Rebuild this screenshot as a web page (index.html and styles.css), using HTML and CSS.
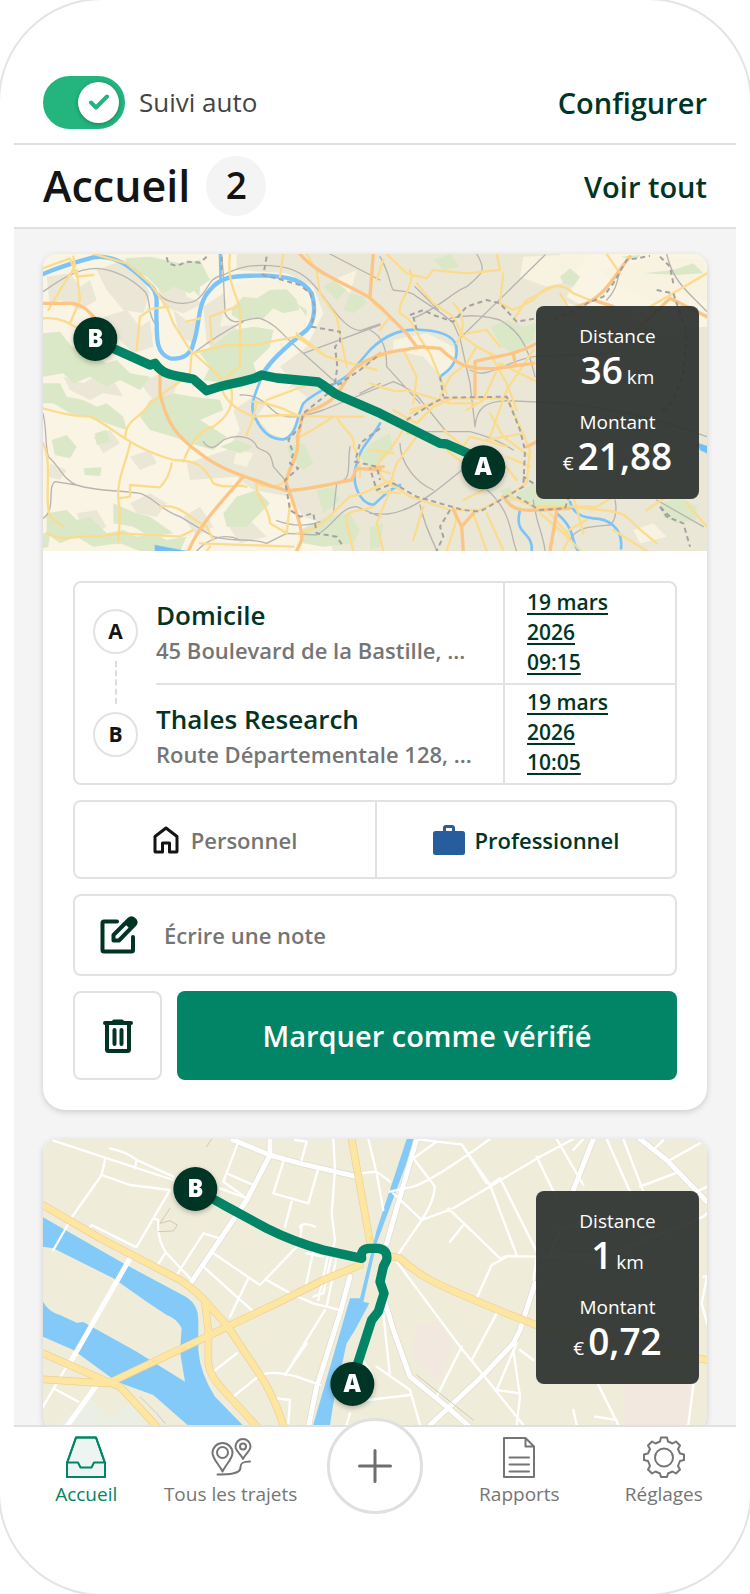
FILE: index.html
```html
<!DOCTYPE html>
<html lang="fr">
<head>
<meta charset="utf-8">
<meta name="viewport" content="width=device-width, initial-scale=1">
<title>Accueil</title>
<link rel="stylesheet" href="styles.css">
</head>
<body>
<div class="phone">
  <header class="tracking">
    <label class="switch">
      <span class="switch-track">
        <input class="switch-input" type="checkbox" role="switch" checked>
        <svg class="switch-check" viewBox="0 0 20 16" aria-hidden="true"><path d="M2 8.500L7 13.500L18 2.500"/></svg>
      </span>
      <span>Suivi auto</span>
    </label>
    <a class="link" href="#configurer">Configurer</a>
  </header>
  <div class="heading">
    <h1 class="title">Accueil</h1>
    <span class="count">2</span>
    <a class="link push" href="#trajets">Voir tout</a>
  </div>

  <main class="feed">
    <article class="card">
      <div class="map">
        <svg class="map-art" viewBox="9 12 1992 891" preserveAspectRatio="xMidYMid slice" role="img" aria-label="Trajet de A à B">
          <rect x="9" y="12" width="1992" height="891" fill="#f9f4e3"/>
          <g class="urban">
            <path d="M590 12L1560 12L1610 90L1580 140L1650 180L1760 170L1840 240L2001 230L2001 903L880 903L850 820L790 800L750 740L640 720L590 680L450 690L440 640L560 600L600 540L580 480L640 440L700 460L760 400L720 350L800 290L850 190L820 110L740 70L590 60Z"/>
            <path d="M20 80L90 70L120 110L150 90L170 150L120 180L60 150L30 170ZM170 60L250 30L300 70L330 130L310 190L250 180L200 120ZM340 60L380 90L430 70L440 140L490 160L430 190L370 170ZM190 200L260 180L300 230L330 210L340 290L280 310L240 270ZM400 180L450 220L480 200L460 280L420 260ZM490 170L550 130L590 240L540 310L500 280ZM70 380L130 400L180 370L220 390L250 440L190 430L150 450L90 420ZM300 400L360 370L420 390L400 430L340 450ZM270 620L330 600L350 640L300 660ZM160 560L210 540L240 580L190 610ZM270 760L330 730L380 760L350 800L290 790ZM110 790L170 780L200 830L140 860ZM430 800L480 770L520 830L470 860ZM560 820L620 800L680 860L600 880ZM30 640L80 660L60 690L25 680Z"/>
          </g>
          <g class="pale">
            <path d="M1060 270L1160 250L1240 290L1250 340L1200 375L1150 320L1060 300ZM700 430L760 410L800 440L770 520L740 570L690 550L650 500ZM540 230L570 110L680 80L780 110L815 190L770 260L680 240L610 220ZM1450 20L1640 12L1600 90L1520 110L1440 80ZM1570 150L1640 190L1590 180ZM1680 60L1850 20L1990 30L2001 150L1910 130L1850 160L1730 110ZM1780 840L1840 820L1880 860L1800 880ZM1680 300L1760 330L1700 360ZM880 90L950 60L930 130ZM590 600L640 610L620 650L580 640ZM720 820L760 800L770 850L730 860Z"/>
          </g>
          <g class="green">
            <path d="M255 25L330 20L420 40L480 30L510 90L450 130L400 110L370 130L320 80L270 60ZM575 175L610 140L650 145L690 120L740 118L770 150L778 180L730 190L700 175L670 205L600 210L575 195ZM9 250L60 245L95 290L150 310L200 340L230 330L270 370L330 380L300 420L240 390L200 410L150 380L100 400L70 370L9 380ZM9 400L60 400L80 440L130 450L170 470L200 460L250 500L260 540L200 520L150 500L90 490L40 460L9 460Z"/>
            <path d="M480 310L540 270L580 240L640 230L700 240L690 290L640 340L650 370L560 400L490 390L510 350ZM330 450L400 430L460 440L540 450L550 480L480 510L560 560L520 600L450 580L400 560L330 540L300 500ZM35 570L80 555L110 590L90 625L45 615ZM165 550L200 540L210 575L170 585ZM130 655L185 652L180 678L135 675ZM460 120L480 110L478 140ZM550 790L590 740L650 720L690 760L650 800L620 830L560 830ZM850 110L880 90L920 120L890 150ZM910 180L930 130L970 140L980 160L940 190ZM770 160L800 200L800 180ZM540 590L590 570L640 590L600 610Z"/>
            <path d="M20 790L80 780L110 810L150 800L200 850L250 840L290 860L340 850L380 870L440 860L420 903L300 903L240 880L160 890L110 860L60 880L20 850ZM220 760L290 790L330 800L400 850L330 860L280 830L220 820ZM740 590L790 580L820 640L790 660L750 620ZM830 720L880 710L900 750L850 790ZM780 840L860 800L930 790L960 840L940 880L850 890L790 880ZM1180 30L1230 12L1260 50L1210 60ZM1350 230L1400 210L1450 230L1490 220L1480 270L1420 310L1385 290ZM1560 80L1590 55L1620 80L1600 110L1570 100ZM1490 300L1480 340L1500 360ZM990 580L1050 550L1060 600L1020 640L990 660L960 620ZM9 850L30 850L25 890L9 895ZM1430 730L1500 690L1580 700L1590 780L1520 780L1440 760ZM1860 760L1920 740L1970 770L1970 810L1910 820L1870 800ZM1810 70L1900 60L1960 40L1990 70L1910 75ZM1740 20L1800 15L1790 30ZM990 830L1030 820L1020 890L990 900ZM1380 720L1410 710L1430 750L1400 760Z"/>
          </g>
          <g class="rail">
            <path d="M9 125C60 90 110 55 170 55C230 60 280 90 315 125C335 150 320 190 345 220M340 110C370 170 440 165 470 150C510 120 500 85 550 75C600 50 640 40 720 50C790 60 820 100 850 140C880 180 920 240 960 242L1020 222M550 75L555 190C580 240 620 200 660 205C710 220 740 270 790 310L890 400M460 310C500 280 560 240 610 215M790 310L1020 225M960 430L1020 400M870 12L1020 90M490 575C510 605 530 590 550 570C590 550 640 560 650 590C670 610 690 590 700 650L735 690M600 435C660 430 680 470 710 490C750 510 790 500 850 480L1060 395C1100 410 1130 430 1150 460L1215 540M9 490C20 530 15 590 25 620C60 650 70 690 110 705C170 725 240 720 300 730C340 740 360 780 420 800L520 860C600 880 620 860 680 880L740 850L830 855C880 830 900 770 950 770L1020 800M9 805C50 780 20 710 45 695L110 705M470 903C510 860 560 850 600 870M710 812C760 830 800 830 840 815M890 700L880 790M930 590C920 650 940 690 890 700M1020 20C1050 70 1050 110 1060 120C1080 125 1110 120 1130 140C1190 180 1210 190 1240 220L1260 265L1290 400L1305 530M1260 265L1515 15M1120 205C1220 160 1230 130 1280 110C1330 70 1340 60 1310 12M1195 180L1125 110M1230 205C1290 190 1350 200 1380 210C1430 240 1460 270 1485 380M1305 530C1310 470 1340 455 1400 452L1590 460C1680 480 1750 470 2001 560M1290 360C1340 390 1380 340 1480 320L1700 310M1130 545L1290 545C1350 560 1390 580 1420 600M990 240C1030 260 1040 300 1040 350L1140 460M1080 580C1080 640 1130 700 1180 720M1290 640C1240 680 1150 760 1090 780C1040 800 1020 790 990 790M1330 710C1420 780 1410 860 1430 903M1480 750C1490 830 1510 850 1515 903M1590 870C1610 830 1650 830 1710 825C1730 810 1730 770 1725 750M1700 150C1740 110 1730 70 1750 40M1880 12C1900 100 1950 130 2001 185M1850 750L1990 830M1140 765C1160 850 1180 870 1190 903"/>
            <path d="M550 75L545 12"/>
          </g>
          <g class="water">
            <path class="w9" d="M9 72C60 50 110 35 160 22C240 10 290 70 335 110C360 140 345 170 350 220C350 270 350 310 390 325C430 330 455 310 460 280C480 230 470 160 510 120C550 70 600 80 670 76C750 80 790 90 815 130C830 180 820 220 800 240C750 280 690 330 670 370"/>
            <path class="w5" d="M670 370C650 420 630 460 640 490C660 540 690 570 730 568C770 560 770 500 790 460C830 420 900 400 930 370L990 300C1040 250 1090 235 1150 240C1220 245 1250 265 1250 300C1250 340 1230 360 1200 380"/>
            <path class="w5" d="M540 12L542 90M1020 520C1000 560 960 590 950 640C930 700 960 760 1000 765C1020 750 1040 720 1080 705M1590 755C1600 790 1620 800 1660 805C1700 805 1750 830 1743 895M1440 780C1420 860 1480 840 1475 903M1550 790C1610 840 1590 870 1615 903M1970 585L2001 600"/>
            <path d="M345 885L370 890L440 903L345 903ZM1975 580L2001 588L2001 610L1980 600Z" fill="#73bdf5"/>
          </g>
          <g class="minor">
            <path d="M9 55L90 25L110 80L160 75M100 20L105 50L60 120L25 180M110 60L120 150L90 220M160 12L260 40L330 100L380 170L400 220L450 300L540 380M330 180L300 200L290 300M325 178L385 170M9 205C60 200 90 220 120 240M480 205L440 215M9 475C60 490 100 500 150 500C220 530 260 590 400 630C480 630 500 660 520 700C560 720 590 700 620 710M255 565C260 500 300 510 330 460C380 420 430 390 450 370L455 310L560 285L640 285L770 260L860 320L1010 360M270 580C260 640 220 700 240 780L235 880M235 745L270 740L270 705L360 712C380 690 390 670 395 640M360 770C420 760 440 800 500 830L520 870M430 635C450 580 480 540 520 530C580 490 590 440 560 380L600 350L600 180C590 130 560 100 570 12M540 380C540 450 590 480 640 500M590 170L510 200L515 280M730 12L720 80M640 500L730 495L850 500L970 500M680 450L760 420L840 390M640 455C700 460 740 480 780 500M620 555C640 510 640 500 650 460M860 320L770 250M770 565C820 540 850 520 880 500M890 500C910 540 950 560 940 590C960 620 960 650 960 680M800 12L830 60L840 130L890 200L920 350M735 695C700 720 660 710 640 690M650 690C640 740 690 770 690 820L740 850L750 760M770 850C850 840 880 780 930 740C990 730 1020 700 1060 690M1000 770C960 790 910 770 920 820L940 903M20 850C80 880 130 850 180 860L240 850L420 860L460 840M480 880L760 890M9 580C40 640 10 750 30 800L70 830M510 890L500 903"/>
            <path d="M1040 12L1100 70L1160 85L1180 60L1280 70L1380 60L1370 12M1110 60C1130 110 1070 150 1080 190C1130 220 1120 240 1150 280L1170 310L1220 430M1130 100L1180 160L1240 200L1270 260L1310 290L1280 340L1230 380L1200 440M1240 160C1270 190 1280 230 1250 280M1280 250L1340 240L1380 290M1390 70L1380 160L1420 180L1480 150C1510 110 1560 90 1600 130L1650 150M1420 210L1460 150L1540 110M1560 130L1590 180M1700 12L1740 70M1830 170L2001 70M1350 310L1400 400L1430 480M1370 320L1310 290M1480 300L1400 420L1350 560M1500 400L1380 340L1330 450L1280 480M990 400C1050 420 1070 430 1100 420L1230 460L1310 460M1110 490L1200 450M1110 500C1090 540 1060 590 1030 620C1000 650 1020 690 1060 710M1100 550C1160 560 1190 570 1220 600L1270 640M1130 560L1070 640L1050 700L1110 740L1230 780L1320 780L1400 740L1460 700L1470 600L1440 530L1400 440M1110 480L1220 445L1400 445M990 600L1060 610M1060 480L1130 520L1180 470L1250 440M1350 490L1390 560L1470 620M1340 570L1450 550M1210 540L1270 590L1290 560L1400 590M1270 750L1350 710M1010 710C1000 740 1060 720 1080 730M990 650L1050 670M1050 720L1010 820L1030 903M1150 770L1120 870M1340 790L1390 900M1300 790L1340 903M1410 740L1480 770L1590 770L1670 770L1720 740M1500 790L1560 840L1620 900M1530 790L1590 860L1570 900M1590 700L1630 850M1640 810L1570 850M1600 770C1720 790 1740 770 1790 830L1850 880M1720 840L1820 903M1880 740L1820 780M1940 760L2001 830M1220 903C1240 840 1260 800 1240 770M1030 30L1010 90M1000 160L1050 200L1020 240M1090 300L1130 380L1120 460M1400 620L1470 650M1430 690L1390 640"/>
          </g>
          <g class="major">
            <path d="M9 160L100 160C140 170 150 190 175 215M360 370L360 430C380 520 410 560 480 610C540 660 620 680 700 710L740 722C800 720 880 700 935 690L950 655L1020 660M610 680C550 750 480 820 445 903M735 690C750 730 790 830 785 870L770 903M740 690C750 640 780 620 772 560C790 520 770 490 830 475C890 450 900 420 930 370C960 330 1000 330 1020 310M780 12C820 60 870 80 985 140L1020 170L1100 250L1130 290L1200 295C1250 340 1270 360 1370 355L1480 340M1000 12L990 140M990 330C1040 300 1100 300 1150 290M1305 440L1305 335C1350 320 1420 320 1490 280M1770 20C1720 80 1700 130 1640 160L1610 170M1660 150L1720 170M1790 240L1890 145L2001 200M1420 310L1425 340M1300 790L1265 830L1270 903M1265 830L1240 780M1390 740C1420 790 1460 780 1500 780L1590 775M1550 785L1530 903M1460 590L1500 570M990 655L1030 650"/>
          </g>
          <path class="edge" d="M380 22L385 40L410 48L440 35L480 38L500 20M680 20L670 75L720 88L780 105L810 130L825 170L815 230L900 245L900 275L885 290L892 350L885 400L870 405L910 400M1010 320L960 360L900 400L840 450L790 490L780 530L745 570L760 610L750 640L775 655L735 690L750 780L780 800L820 790L830 850L890 860L910 890M1020 535L960 580L945 635L1010 650L1020 690M545 20L545 60M1110 195L1150 180L1180 195L1240 215L1280 170L1340 150L1380 160L1430 215L1490 205M1540 210C1570 190 1620 180 1640 160L1690 140L1720 100L1760 30L1830 18M1860 20L1890 50L1900 100M1850 120L1900 130L1940 250L1930 370L1900 450L1860 490M1120 200L1130 240M1100 510L1170 465L1210 443L1400 440L1440 540L1455 600L1450 710L1390 745L1320 785L1270 780L1130 740L1060 700L1010 720L990 655M1200 380L1210 440M1230 780L1200 830L1210 860L1190 903M1430 740L1500 780L1575 775L1590 730M1860 770L1880 800L1930 820L1950 890M1890 800L1860 770M1480 700L1450 680"/>
          <path class="route" d="M166 267L225 298L330 345L345 340C365 370 385 375 460 387L500 422C560 400 600 400 650 382L665 375L710 384L835 396C860 410 870 425 900 438L1020 490L1200 580L1220 582L1330 630"/>
          <g class="marker">
            <circle cx="166" cy="267" r="66"/><text x="166" y="290">B</text>
            <circle cx="1330" cy="652" r="66"/><text x="1330" y="675">A</text>
          </g>
        </svg>
        <dl class="stats">
          <dt>Distance</dt><dd><strong>36</strong><span class="unit">km</span></dd>
          <dt>Montant</dt><dd><span class="unit">€</span><strong>21,88</strong></dd>
        </dl>
      </div>

      <div class="details">
        <div class="stops">
          <div class="stop">
            <span class="dot dot-from">A</span>
            <div class="place"><h2 class="name">Domicile</h2><p class="address">45 Boulevard de la Bastille, ...</p></div>
            <div class="when"><a href="#depart">19 mars 2026 09:15</a></div>
          </div>
          <div class="stop stop-end">
            <span class="dot">B</span>
            <div class="place"><h2 class="name">Thales Research</h2><p class="address">Route Départementale 128, ...</p></div>
            <div class="when"><a href="#arrivee">19 mars 2026 10:05</a></div>
          </div>
        </div>

        <div class="kinds" role="radiogroup" aria-label="Type de trajet">
          <label class="kind">
            <input class="kind-input" type="radio" name="kind">
            <svg class="kind-home" viewBox="0 0 26 28" aria-hidden="true"><path d="M2 10.500L13 2L24 10.500V25.500Q24 26 23.500 26H16.500V17H9.500V26H2.500Q2 26 2 25.500Z"/></svg>
            <span>Personnel</span>
          </label>
          <label class="kind">
            <input class="kind-input" type="radio" name="kind" checked>
            <svg class="kind-case" viewBox="0 0 32 30" aria-hidden="true"><path fill-rule="evenodd" d="M2.500 6H10V3Q10 0 13 0H19Q22 0 22 3V6H29.500Q32 6 32 8.500V27.500Q32 30 29.500 30H2.500Q0 30 0 27.500V8.500Q0 6 2.500 6ZM13 3V6H19V3Z"/></svg>
            <span>Professionnel</span>
          </label>
        </div>

        <label class="note">
          <svg class="note-icon" viewBox="0 0 38 38" aria-hidden="true">
            <path d="M17 5.500H4Q2.500 5.500 2.500 7V34Q2.500 35.500 4 35.500H31.500Q33 35.500 33 34V21"/>
            <path d="M13.500 24.500V19L29 3.500Q31.500 1 34 3.500Q37 6 34.500 8.500L19 24.500Z"/>
            <path class="solid" d="M25 8L30 2.500Q32 .500 34.500 2.500L36 4Q38 6.500 36 8.500L30.500 13.500Z"/>
            <path class="thin" d="M17.500 20.500L26 12"/>
          </svg>
          <input class="note-input" type="text" placeholder="Écrire une note" aria-label="Écrire une note">
        </label>

        <div class="actions">
          <button class="delete" type="button" aria-label="Supprimer">
            <svg class="delete-icon" viewBox="0 0 30 34" aria-hidden="true"><path d="M2 4H28M11 2.500H19M4 5V30.500Q4 32 5.500 32H24.500Q26 32 26 30.500V5M11.500 11V25M18.500 11V25"/></svg>
          </button>
          <button class="verify" type="button">Marquer comme vérifié</button>
        </div>
      </div>
    </article>

    <article class="card">
      <div class="map">
        <svg class="map-art" viewBox="9 27 1992 891" preserveAspectRatio="xMidYMid slice" role="img" aria-label="Trajet de A à B">
          <rect x="9" y="27" width="1992" height="891" fill="#efecda"/>
          <path fill="#f3e8df" d="M1125 590L1190 575L1240 640L1200 760L1120 690ZM1750 765L1955 765L1945 918L1750 918Z"/>
          <path fill="#ebeee3" d="M9 918L150 800L210 870L270 820L360 885L360 918Z"/>
          <g fill="#83caf8">
            <path d="M9 262L250 400L440 502Q475 525 475 570L475 660Q480 730 525 800L640 918L480 918L340 795L230 755L100 660L9 620L9 515Q25 545 60 555L110 578L130 576L290 665L435 755L420 665L425 595Q410 565 380 555L320 515L220 445L40 355L9 350Z"/>
            <path d="M1100 27L1126 27L1010 340L970 515L988 520L945 600L920 640L880 820L865 918L810 918L930 505L960 505L1010 300Z"/>
          </g>
          <g class="street-case">
            <path d="M800 918L830 770L900 550L930 440M690 20L690 75L620 210L455 455M590 35L690 75L780 100L950 140M1130 27L1040 340M1660 27L1600 180M1800 27L1880 90L2001 215M1485 460L1440 600L1420 640L1330 735L1170 885M1030 500L1060 600L1110 740L1220 830L1300 900"/>
          </g>
          <g class="street-wide">
            <path d="M95 690L270 385M60 918L170 765M800 918L830 770L900 550L930 440M690 20L690 75L620 210L455 455M580 30L690 75L780 100L950 140M1130 27L1040 340M1660 27L1600 180M1800 27L1880 90L2001 215M1485 460L1440 600L1420 640L1330 735L1170 885M1030 500L1060 600L1110 740L1220 830L1300 900"/>
          </g>
          <g class="street">
            <path d="M40 32L400 150M210 55Q260 65 290 90L400 140M290 90L285 115M195 90L185 135L100 255L40 360M185 135L270 165L390 180L290 350M150 290L155 285L285 350M340 265L355 270Q350 330 380 370L455 450M375 370L350 410M410 435L490 310L540 325M595 35L550 155L620 205M560 130L640 165M540 175L620 205M730 95L700 190L805 220L835 115M755 215L735 290M765 30L800 35L785 90M880 27L885 120L875 250L885 330L850 490L820 500M780 290Q790 275 825 290M785 285L780 340L660 465L520 370M490 410L640 545M625 445L570 560M680 450L750 490L820 520L900 540M865 370L835 510M890 380L860 530M855 540L735 735L800 640M800 370L850 380M825 340L795 480M520 725L590 670M580 800L660 735Q700 720 770 740L840 765M710 805L750 810L745 880M960 130L1010 125L1050 155M985 27L1010 130L1030 240M960 680L990 720L1000 740M985 810L1110 795"/>
            <path d="M9 830L80 710M40 775L115 815M910 918L930 850"/>
            <path d="M1120 85L1190 35L1265 43L1350 165L1430 375M1190 35L1130 27M1265 43L1340 160M1380 145L1350 165M1050 185L1120 170Q1180 150 1350 27M1120 85L1185 170Q1180 220 1145 270L1070 380M1060 190L1145 270L1240 235L1500 80L1600 27M1225 235L1380 385M1270 285L1230 335M1310 505L1355 405L1405 378L1485 380L1700 375M1380 385L1400 378M1380 145L1490 365M1490 80L1550 205M1550 27L1630 165M1630 27L1600 60M1700 27L1770 185M1750 27L1810 185M1800 170L1905 130M1840 60L1870 30M1890 90L1980 40M1960 190L2001 170M1990 440L2001 440M1070 395L1260 650L1330 735L1450 885M1370 550L1295 690M1265 650L1190 800M1430 640L1370 780L1440 790M1420 660L1440 800L1430 885M1440 660L1480 690M1490 380L1480 450M1030 550L1050 740M1010 710L1110 780M1110 780L1140 885M1600 840L1610 885M1665 860L1730 870M1675 765L1735 885M1960 765L1945 885M2001 440L1985 520L2001 580M1990 260L2001 250M1640 270L1560 300L1530 375M1700 375L1990 260"/>
          </g>
          <g class="road-case"><path d="M9 225L180 325L420 450Q480 490 510 530L560 585L650 720Q700 790 735 900M495 520L505 600V700Q510 740 550 780L660 900M215 755L500 620L720 515L850 450L960 405M935 27L955 140L990 335M9 670L190 750L240 770L360 900M9 748L200 760M1050 378L1080 385Q1130 430 1180 455Q1270 500 1500 590L1700 640L2001 690"/></g>
          <g class="road"><path d="M9 225L180 325L420 450Q480 490 510 530L560 585L650 720Q700 790 735 900M495 520L505 600V700Q510 740 550 780L660 900M215 755L500 620L720 515L850 450L960 405M935 27L955 140L990 335M9 670L190 750L240 770L360 900M9 748L200 760M1050 378L1080 385Q1130 430 1180 455Q1270 500 1500 590L1700 640L2001 690"/></g>
          <path d="M390 235L360 280L390 272L412 285L400 303L355 305M500 50L515 27M300 800L350 850L375 880M1130 735L1300 870" fill="none" stroke="#cfc9bb" stroke-width="3"/>
          <path class="route" d="M466 177L560 230L680 295Q760 335 850 360L965 385Q960 355 990 355L1015 355Q1045 360 1040 390L1030 410L1020 455L1032 490L1015 545L995 570L950 710L937 762"/>
          <g class="marker">
            <circle cx="466" cy="177" r="66"/><text x="466" y="200">B</text>
            <circle cx="937" cy="762" r="66"/><text x="937" y="785">A</text>
          </g>
        </svg>
        <dl class="stats">
          <dt>Distance</dt><dd><strong>1</strong><span class="unit">km</span></dd>
          <dt>Montant</dt><dd><span class="unit">€</span><strong>0,72</strong></dd>
        </dl>
      </div>
    </article>
  </main>

  <nav class="tabs" aria-label="Navigation">
    <a class="tab tab-active" href="#accueil" aria-current="page">
      <svg class="tab-icon" viewBox="0 0 42 42" aria-hidden="true"><path fill="#ecf5f2" d="M11 1.500H31L40 27V41H2V27Z"/><path d="M2 27L11 1.500H31L40 27M2 26.500H13L15.500 31.500H26.500L29 26.500H40V41H2Z"/></svg>
      <span>Accueil</span>
    </a>
    <a class="tab" href="#tous">
      <svg class="tab-icon" viewBox="0 0 42 42" aria-hidden="true"><path d="M12.500 35.500C9 28 2.500 23 2.500 17A10 10 0 0 1 22.500 17C22.500 23 16 28 12.500 35.500ZM33 23C31 18 25.500 15 25.500 10.500A7.500 7.500 0 0 1 40.500 10.500C40.500 15 35 18 33 23ZM7.500 38.500C17 38.500 31 38.500 30.500 31C30.500 27 33 25.500 40 25.500"/><circle cx="12.500" cy="16.500" r="5.500"/><circle cx="33" cy="10.500" r="3"/></svg>
      <span>Tous les trajets</span>
    </a>
    <div class="tab-slot">
      <button class="add" type="button" aria-label="Ajouter un trajet"><svg class="add-icon" viewBox="0 0 34 34" aria-hidden="true"><path d="M17 1.500V32.500M1.500 17H32.500"/></svg></button>
    </div>
    <a class="tab" href="#rapports">
      <svg class="tab-icon" viewBox="0 0 42 42" aria-hidden="true"><path d="M6 2H27.500L36 10.500V41H6ZM27.500 2V10.500H36M11.500 21.500H31M11.500 28.500H31M11.500 35.500H31"/></svg>
      <span>Rapports</span>
    </a>
    <a class="tab" href="#reglages">
      <svg class="tab-icon" viewBox="0 0 42 42" aria-hidden="true"><path d="M17 5.500L18 1.500H24L25 5.500L29.500 7.500L33 5.500L37 9.500L35 13L37 17.500L41 18.500V24L37 25L35 30L37 33.500L33 37.500L29.500 35.500L25 37.500L24 41H18L17 37.500L12.500 35.500L9 37.500L5 33.500L7 30L5 25L1 24V18.500L5 17.500L7 13L5 9.500L9 5.500L12.500 7.500Z"/><circle cx="21" cy="21.500" r="9"/></svg>
      <span>Réglages</span>
    </a>
  </nav>
</div>
</body>
</html>
```
FILE: styles.css
```css
* { box-sizing: border-box; }

body {
  margin: 0;
  overflow: hidden;
  background: #fff;
  color: #141414;
  font-family: "Open Sans", "Noto Sans", sans-serif;
}

h1, h2, p, dl, dd { margin: 0; }
a { color: inherit; text-decoration: none; }
button, input { font: inherit; color: inherit; }
svg { display: block; fill: none; stroke-linecap: round; stroke-linejoin: round; }

.phone {
  position: relative;
  display: flex;
  flex-direction: column;
  height: 100vh;
  padding: 0 14px;
}

/* Device outline */
.phone::after {
  content: "";
  position: absolute;
  inset: -2px;
  border: 2px solid #e4e4e4;
  border-radius: 104px;
  pointer-events: none;
}

.tracking, .heading {
  display: flex;
  align-items: center;
  padding: 0 29px;
  border-bottom: 2px solid #e0e0e0;
}
.tracking { justify-content: space-between; padding-top: 76px; padding-bottom: 14px; }
.heading { height: 84px; gap: 16px; }

.switch { display: flex; align-items: center; gap: 14px; color: #444; font-size: 26px; line-height: 53px; }
.switch-track { position: relative; display: block; }
.switch-input {
  appearance: none;
  display: flex;
  align-items: center;
  justify-content: flex-end;
  width: 82px;
  height: 53px;
  margin: 0;
  padding: 6px;
  border-radius: 27px;
  background: #24b47e;
}
.switch-input::before {
  content: "";
  width: 41px;
  height: 41px;
  border-radius: 50%;
  background: #fff;
  box-shadow: 0 1px 4px rgba(0, 0, 0, .3);
}
.switch-check { position: absolute; top: 18px; right: 16px; width: 20px; height: 16px; stroke: #24b47e; stroke-width: 4; }

.link { color: #003526; font-size: 29px; font-weight: 600; }
.push { margin-left: auto; }
.title { font-size: 43px; font-weight: 600; line-height: 60px; }
.count {
  width: 60px;
  height: 60px;
  border-radius: 50%;
  background: #f4f4f4;
  font-size: 37px;
  font-weight: 600;
  line-height: 57px;
  text-align: center;
}

.feed {
  flex: 1;
  display: flex;
  flex-direction: column;
  gap: 29px;
  min-height: 0;
  padding: 25px 29px 0;
  overflow: hidden;
  background: #f4f4f4;
}
.card {
  flex: none;
  overflow: hidden;
  border-radius: 14px 14px 22px 22px;
  background: #fff;
  box-shadow: 0 2px 6px rgba(0, 0, 0, .16);
}

.map { position: relative; display: flex; align-items: center; justify-content: flex-end; height: 297px; padding-right: 8px; }
.map-art { position: absolute; inset: 0; width: 100%; height: 100%; }
.urban { fill: #ebe7d7; }
.pale { fill: #f8f3e0; }
.green { fill: #dae8c7; }
.rail { stroke: #b8b5b1; stroke-width: 4; }
.water { stroke: #7cc3f8; }
.w9 { stroke-width: 13; }
.w5 { stroke-width: 8; }
.minor { stroke: #fbdc8e; stroke-width: 7; }
.major { stroke: #fcc583; stroke-width: 10; }
.edge { stroke: #a4a2a2; stroke-width: 6; stroke-dasharray: 15 11; stroke-linecap: butt; }
.route { stroke: #028466; stroke-width: 28; stroke-linecap: butt; }
.street { stroke: #fff; stroke-width: 7; }
.street-wide { stroke: #fff; stroke-width: 15; }
.street-case { stroke: #dedbd0; stroke-width: 19; }
.road { stroke: #fde6a0; stroke-width: 19; }
.road-case { stroke: #f1cc99; stroke-width: 23; }
.marker { fill: #003526; filter: drop-shadow(0 6px 8px rgba(0, 0, 0, .25)); }
.marker text { fill: #fff; font-size: 72px; font-weight: 800; text-anchor: middle; }

.stats {
  position: relative;
  width: 163px;
  height: 193px;
  padding-top: 18px;
  border-radius: 8px;
  background: rgba(45, 49, 47, .93);
  color: #fff;
  text-align: center;
}
.stats dt { font-size: 19px; line-height: 24px; }
.stats dd { display: flex; align-items: baseline; justify-content: center; gap: 4px; height: 62px; line-height: 44px; }
.stats strong { font-size: 37px; font-weight: 600; }
.unit { font-size: 19px; }

.details { display: grid; gap: 15px; padding: 30px; }
.stops, .kinds, .note, .delete { border: 2px solid #e2e2e2; border-radius: 8px; background: #fff; }
.stop { display: grid; grid-template-columns: 81px 1fr 172px; height: 100px; }
.stop-end .when, .stop-end .place { border-top: 2px solid #e2e2e2; }
.dot {
  position: relative;
  align-self: center;
  justify-self: center;
  width: 45px;
  height: 45px;
  border: 2px solid #e2e2e2;
  border-radius: 50%;
  font-size: 21px;
  font-weight: 700;
  line-height: 40px;
  text-align: center;
}
.dot-from { margin-bottom: 4px; }
.stop-end .dot { margin-top: 3px; }
.dot-from::after {
  content: "";
  position: absolute;
  top: 50px;
  left: 20px;
  height: 43px;
  border-left: 2px dashed #dcdcdc;
}
.place { padding-top: 15px; min-width: 0; }
.stop-end .place { padding-top: 17px; }
.name { color: #003526; font-size: 26px; font-weight: 600; line-height: 35px; }
.address { color: #757575; font-size: 22px; font-weight: 600; line-height: 34px; white-space: nowrap; }
.when { padding: 4px 60px 4px 22px; border-left: 2px solid #e2e2e2; color: #003526; font-size: 21px; font-weight: 600; line-height: 30px; }
.stop-end .when { padding-top: 2px; }
.when a { text-decoration: underline; text-decoration-thickness: 2px; text-underline-offset: 3px; }

.kinds { display: grid; grid-template-columns: 1fr 1fr; height: 79px; }
.kind { position: relative; display: flex; align-items: center; justify-content: center; gap: 12px; color: #757575; font-size: 22px; font-weight: 600; }
.kind + .kind { gap: 10px; border-left: 2px solid #e2e2e2; }
.kind-input { position: absolute; opacity: 0; }
.kind-input:checked ~ span { color: #003526; }
.kind-home { width: 26px; height: 28px; stroke: #141414; stroke-width: 3; }
.kind-case { width: 32px; height: 30px; fill: #275d9c; }

.note { display: flex; align-items: center; gap: 26px; height: 82px; padding: 0 25px; }
.note-icon { flex: none; width: 38px; height: 38px; stroke: #003526; stroke-width: 4; }
.note-icon .solid { fill: #003526; stroke: none; }
.note-icon .thin { stroke: #fff; stroke-width: 1; }
.note-input { flex: 1; min-width: 0; padding: 0; border: 0; outline: 0; background: none; font-size: 22px; font-weight: 600; }
.note-input::placeholder { color: #757575; opacity: 1; }

.actions { display: flex; gap: 15px; height: 89px; }
.delete { display: grid; place-items: center; width: 89px; padding: 0; }
.delete-icon { width: 30px; height: 34px; stroke: #003526; stroke-width: 4; }
.verify { flex: 1; border: 0; border-radius: 8px; background: #028466; color: #fff; font-size: 29px; font-weight: 600; }

.tabs {
  display: grid;
  grid-template-columns: repeat(5, 1fr);
  height: 169px;
  border-top: 2px solid #e0e0e0;
  color: #757575;
  font-size: 19px;
}
.tab { display: flex; flex-direction: column; align-items: center; gap: 3px; padding-top: 9px; line-height: 26px; white-space: nowrap; }
.tab-active { color: #028466; }
.tab-icon { width: 42px; height: 42px; stroke: currentColor; stroke-width: 2; }
.tab-slot { position: relative; display: flex; justify-content: center; }
.add {
  position: absolute;
  top: -9px;
  display: grid;
  place-items: center;
  width: 96px;
  height: 96px;
  padding: 0;
  border: 3px solid #e0e0e0;
  border-radius: 50%;
  background: #fff;
}
.add-icon { width: 34px; height: 34px; stroke: #6e6e6e; stroke-width: 3; }
```
